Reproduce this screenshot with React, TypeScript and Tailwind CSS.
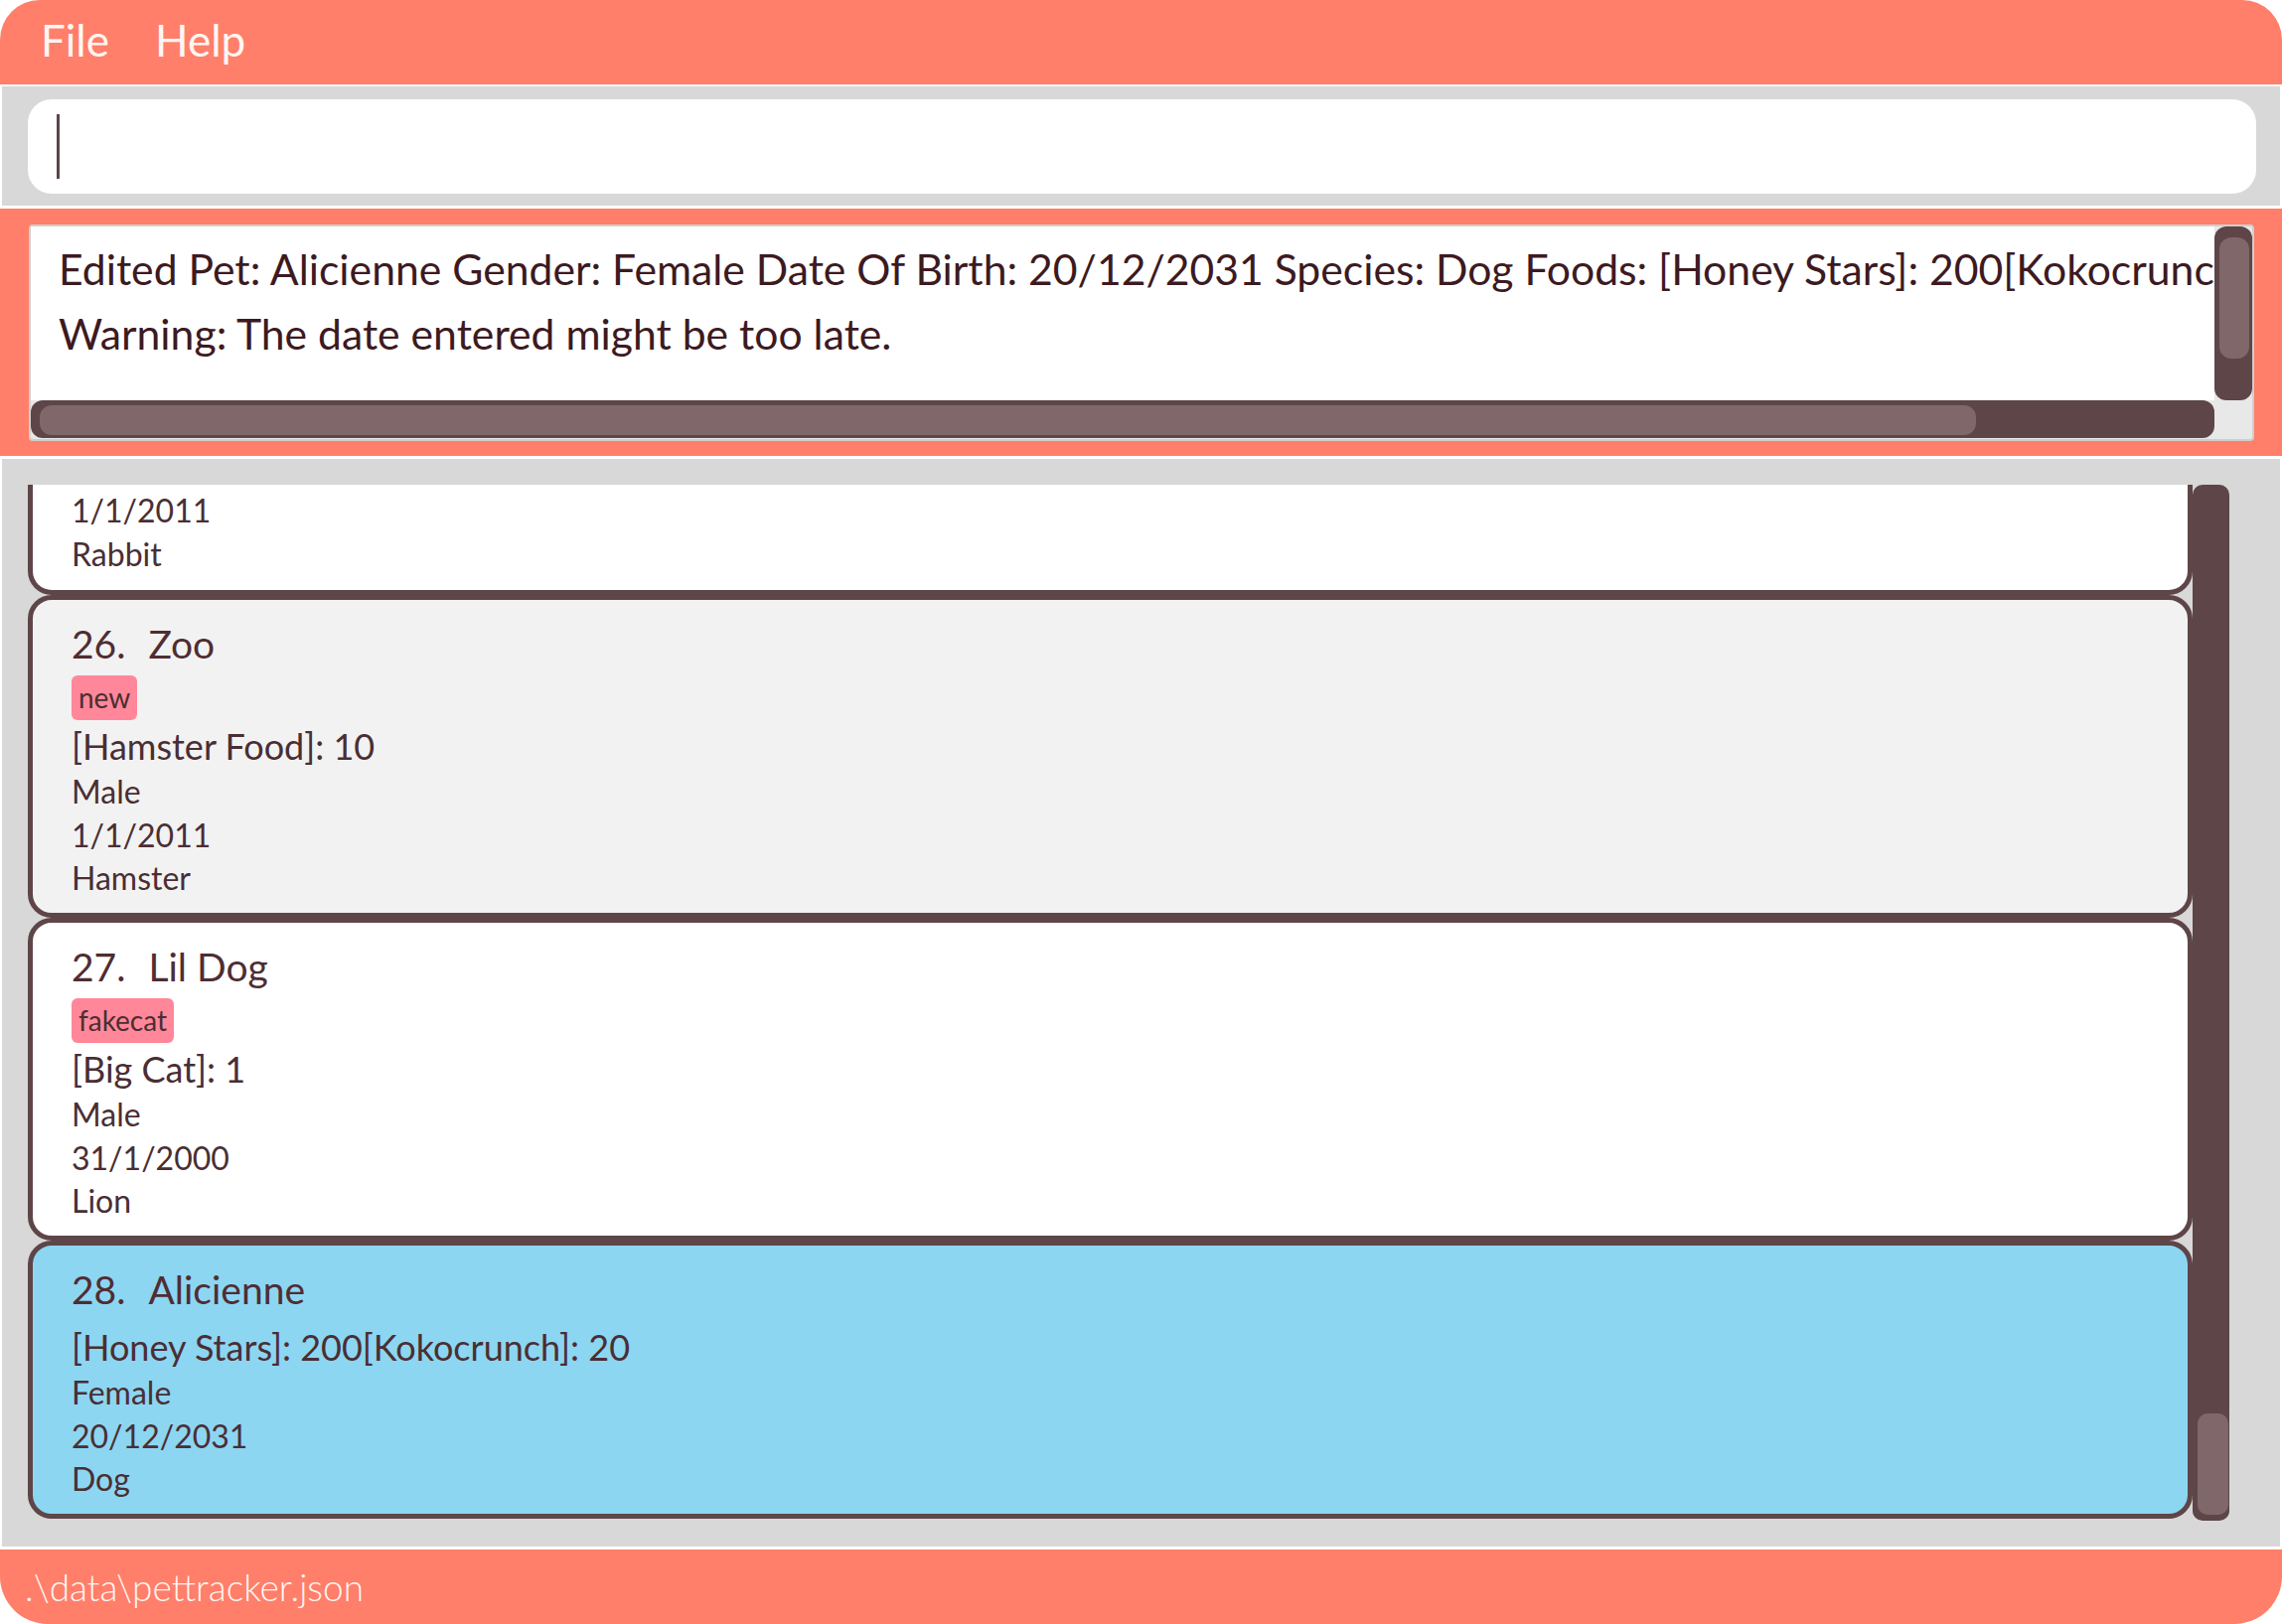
interface IPet {
  idx: number;
  name: string;
  tags: string[];
  food: string;
  gender: string;
  dob: string;
  species: string;
  bg: string;
}

const pets: IPet[] = [
  {
    idx: 26,
    name: "Zoo",
    tags: ["new"],
    food: "[Hamster Food]: 10",
    gender: "Male",
    dob: "1/1/2011",
    species: "Hamster",
    bg: "bg-[#f2f2f2]"
  },
  {
    idx: 27,
    name: "Lil Dog",
    tags: ["fakecat"],
    food: "[Big Cat]: 1",
    gender: "Male",
    dob: "31/1/2000",
    species: "Lion",
    bg: "bg-white"
  },
  {
    idx: 28,
    name: "Alicienne",
    tags: [],
    food: "[Honey Stars]: 200[Kokocrunch]: 20",
    gender: "Female",
    dob: "20/12/2031",
    species: "Dog",
    bg: "bg-[#8cd6f2]"
  }
];

const PetCard = ({ pet }: { pet: IPet }) => (
  <div
    className={`rounded-[24px] border-[5px] border-[#5e4548] ${pet.bg} pl-[39px] pt-[18px] pb-[14px]`}
  >
    <div className="flex text-[39px] leading-[52px] text-[#4f2d33]">
      <span>{pet.idx}.</span>
      <span className="ml-[23px]">{pet.name}</span>
    </div>
    {pet.tags.length > 0 && (
      <div className="mt-[6px] flex h-[45px] gap-[10px]">
        {pet.tags.map((t) => (
          <span
            key={t}
            className="rounded-[6px] bg-[#ff8799] px-[7px] text-[28px] leading-[45px]"
          >
            {t}
          </span>
        ))}
      </div>
    )}
    <div
      className={`${pet.tags.length > 0 ? "mt-[2px]" : "mt-[8px]"} text-[36px] leading-[48px]`}
    >
      {pet.food}
    </div>
    <div className="text-[32px] leading-[44px]">{pet.gender}</div>
    <div className="text-[32px] leading-[43px]">{pet.dob}</div>
    <div className="text-[32px] leading-[43px]">{pet.species}</div>
  </div>
);

const ResultBox = () => (
  <div className="grid grid-cols-[1fr_38px] grid-rows-[175px_38px] rounded-[4px] border-2 border-[#cfcfcf] bg-[#e8e8e8] pb-[1px]">
    <div className="overflow-hidden whitespace-nowrap bg-white pl-[28px] pt-[10px] text-[42.7px] leading-[65px] text-[#3d1a1f]">
      <div>
        Edited Pet: Alicienne Gender: Female Date Of Birth: 20/12/2031 Species: Dog Foods: [Honey Stars]: 200[Kokocrunch]: 20
      </div>
      <div>Warning: The date entered might be too late.</div>
    </div>
    <div className="rounded-[12px] bg-[#5e4548] pl-[5px] pt-[11px]">
      <div className="h-[122px] w-[30px] rounded-[12px] bg-[#806769]" />
    </div>
    <div className="rounded-[12px] bg-[#5e4548] pl-[9px] pt-[5px]">
      <div className="h-[30px] w-[1949px] rounded-[12px] bg-[#806769]" />
    </div>
    <div />
  </div>
);

export default function App() {
  return (
    <div className="flex h-[1635px] w-[2297px] flex-col bg-white font-['Lato','Open_Sans',sans-serif] text-[#4a2e33]">
      <div className="flex h-[85px] items-center rounded-t-[40px] bg-[#ff7f6a] pb-[5px] pl-[41px] text-[44px] text-[#fff6f3]">
        <span>File</span>
        <span className="ml-[46px]">Help</span>
      </div>

      <div className="mx-[2px] mt-[2px] h-[120px] bg-[#d8d8d8] pl-[26px] pr-[24px] pt-[13px]">
        <div className="flex h-[95px] items-center rounded-[24px] bg-white pl-[29px]">
          <div className="h-[65px] w-[3px] bg-[#5e4548]" />
        </div>
      </div>

      <div className="mt-[3px] h-[249px] bg-[#ff7f6a] pl-[29px] pr-[28px] pt-[16px]">
        <ResultBox />
      </div>

      <div className="mx-[2px] mt-[3px] flex h-[1095px] bg-[#d8d8d8] pb-[26px] pl-[26px] pr-[51px] pt-[26px]">
        <div className="flex-1 overflow-hidden">
          <div className="rounded-b-[24px] border-x-[5px] border-b-[5px] border-[#5e4548] bg-white pl-[39px] pt-[4px] pb-[14px]">
            <div className="text-[32px] leading-[44px]">1/1/2011</div>
            <div className="text-[32px] leading-[44px]">Rabbit</div>
          </div>
          {pets.map((p) => (
            <PetCard key={p.idx} pet={p} />
          ))}
        </div>
        <div className="flex w-[37px] flex-col justify-end rounded-[10px] bg-[#5e4548] pb-[6px] pl-[5px] pr-[1px]">
          <div className="h-[102px] rounded-[10px] bg-[#806769]" />
        </div>
      </div>

      <div className="mt-[3px] flex h-[75px] items-center rounded-b-[48px] bg-[#ff7f6a] pl-[25px] text-[37px] font-light text-[#fff6f3]">
        .\data\pettracker.json
      </div>
    </div>
  );
}
